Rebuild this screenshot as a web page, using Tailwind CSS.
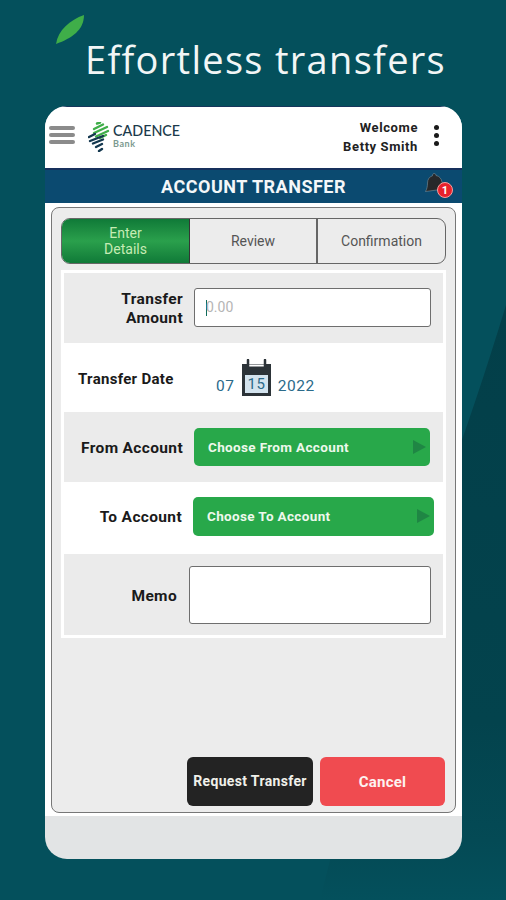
<!DOCTYPE html>
<html>
<head>
<meta charset="utf-8">
<script src="https://cdn.jsdelivr.net/npm/@tailwindcss/browser@4"></script>
</head>
<body class="m-0">
<div class="relative w-[506px] h-[900px] overflow-hidden bg-[#04505c] font-['Roboto',sans-serif]">
  <svg class="absolute left-0 top-0" width="506" height="900" viewBox="0 0 506 900">
    <defs>
      <linearGradient id="fade" gradientUnits="userSpaceOnUse" x1="0" y1="305" x2="0" y2="900">
        <stop offset="0" stop-color="#033f49"/>
        <stop offset="0.7" stop-color="#03434d"/>
        <stop offset="0.9" stop-color="#044a55"/>
        <stop offset="1" stop-color="#04505c"/>
      </linearGradient>
    </defs>
    <path d="M506 305 C480 390 450 480 405 590 C370 700 340 820 320 900 L506 900 Z" fill="url(#fade)"/>
    <path d="M56 44 C58 30 70 20 84 15 C84 30 72 38 56 44 Z" fill="#3fae49"/>
  </svg>
  <div class="relative">
    <div class="h-[106px] pl-[85px] pt-[35px]">
      <h1 class="m-0 text-[38px] leading-[48px] font-normal tracking-[1.3px] text-[#f2f6f6] font-['Open_Sans',sans-serif] whitespace-nowrap">Effortless transfers</h1>
    </div>
    <div class="ml-[45px] w-[417px] h-[753px] rounded-[22px] overflow-hidden bg-[#e2e4e5] flex flex-col">
      <header class="h-[64px] bg-white border-t border-[#16365c] border-b-2 border-b-[#16305c] flex items-center pl-[4px] pr-[23px] shrink-0">
        <div class="w-[26px] flex flex-col gap-[3px] -mt-[5px]">
          <span class="h-[4px] bg-[#8b8b8b] rounded-sm"></span>
          <span class="h-[4px] bg-[#8b8b8b] rounded-sm"></span>
          <span class="h-[4px] bg-[#8b8b8b] rounded-sm"></span>
        </div>
        <svg class="ml-[13px] -mt-[2px]" width="22" height="30" viewBox="0 0 22 30" fill="none" stroke-linecap="round">
          <g stroke="#3fae49" stroke-width="2.4">
            <path d="M9 1.5 L12 0.5"/><path d="M6 7 L15 2.5"/><path d="M6 11 L19 5"/><path d="M8 14.5 L20 9"/><path d="M12 16 L18 13"/>
          </g>
          <g stroke="#14384f" stroke-width="2.4">
            <path d="M1 15 L7 12"/><path d="M2 19 L15 14"/><path d="M5 21.500 L15 17.500"/><path d="M8 25 L14 22"/><path d="M11 29 L14 27"/>
          </g>
        </svg>
        <div class="ml-[3px] -mt-[3px] flex flex-col">
          <span class="text-[14.300px] leading-[15px] font-medium text-[#1b3a4b] font-['Lato',sans-serif]">CADENCE</span>
          <span class="text-[9px] leading-[10px] mt-[1px] font-bold text-[#7c9a90] font-['Lato',sans-serif] tracking-[0.6px]">Bank</span>
        </div>
        <div class="ml-auto text-right text-[13px] leading-[19px] font-bold tracking-[0.6px] text-[#222] -mt-[1px]">
          <div>Welcome</div>
          <div>Betty Smith</div>
        </div>
        <div class="ml-[16px] w-[5px] flex flex-col gap-[3px] -mt-[5px]">
          <span class="h-[5px] rounded-full bg-[#1a1a1a]"></span>
          <span class="h-[5px] rounded-full bg-[#1a1a1a]"></span>
          <span class="h-[5px] rounded-full bg-[#1a1a1a]"></span>
        </div>
      </header>
      <div class="relative h-[33px] shrink-0 bg-[#0b4a70] flex items-center justify-center">
        <span class="text-[18px] font-bold text-[#f4f7f9] tracking-[0.5px] -mt-[1px]">ACCOUNT TRANSFER</span>
        <svg class="absolute left-[380px] top-[3px]" width="20" height="21" viewBox="0 0 20 21">
          <path d="M9 0.500 C10.500 0.500 11 1.500 11 2.500 C14.500 3 16.500 6 17 9 C17.500 12 18.500 14 19.500 16 L0.500 18.500 C2 16 2.500 13 2.500 10 C2.500 6.500 4.500 3.500 7.500 2.800 C7.500 1.500 8 0.500 9 0.500 Z" fill="#26282a" stroke="#8fa3ad" stroke-width="0.5"/>
        </svg>
        <span class="absolute left-[392px] top-[12px] w-[16px] h-[16px] rounded-full bg-[#e8222c] border border-[#f5a0a0] flex items-center justify-center text-[11px] leading-none font-bold text-white">1</span>
      </div>
      <div class="h-[613px] shrink-0 bg-white pt-[4px] px-[6px] pb-[3px]">
        <div class="h-full border border-[#777] rounded-lg bg-[#ececec] flex flex-col px-[9px] pt-[10px] pb-[6px]">
          <div class="h-[46px] grid grid-cols-[128px_128px_1fr] rounded-[9px] border border-[#666] overflow-hidden text-[14px] text-[#555] shrink-0">
            <div class="bg-linear-to-b from-[#0f7a38] via-[#2aa04c] to-[#0f7a38] flex items-center justify-center text-center leading-[16px] text-[#c6ecb4] border-r border-[#333]">Enter<br>Details</div>
            <div class="flex items-center justify-center border-r-2 border-[#666]">Review</div>
            <div class="flex items-center justify-center">Confirmation</div>
          </div>
          <div class="mt-[6px] bg-white p-[3px] text-[15.500px] font-bold text-[#1a1a1a] tracking-[0.35px]">
            <div class="h-[70px] bg-[#ebebeb] flex items-center pl-[3px]">
              <div class="w-[116px] text-right leading-[19px] mt-[1px]">Transfer<br>Amount</div>
              <div class="ml-[11px] w-[237px] h-[39px] -mt-px bg-white border border-[#6e6e6e] rounded-[3px] flex items-center pl-[11px] text-[14px] font-normal text-[#b5b5b5] tracking-normal">
                <span class="w-px h-[16px] bg-[#0f6b5a] mr-[1px]"></span><span class="-ml-[2px]">0.00</span>
              </div>
            </div>
            <div class="h-[69px] flex items-center pl-[14px]">
              <div class="w-[127px] mt-[3px] text-[15px] tracking-[0.3px] whitespace-nowrap">Transfer Date</div>
              <div class="ml-[11px] flex items-end gap-[6px] text-[15.500px] font-normal text-[#2b6a8a] tracking-[0.6px] mt-[3px]">
                <span class="mb-[1px]">07</span>
                <svg class="mb-[3px]" width="31" height="38" viewBox="0 0 31 38">
                  <rect x="1" y="5" width="29" height="32" fill="#2c3338"/>
                  <rect x="4" y="16" width="23" height="18" fill="#d3e3ee"/>
                  <path d="M8 6.500 H23" stroke="#fff" stroke-width="2"/>
                  <path d="M7 1v8M24 1v8" stroke="#2c3338" stroke-width="2.500" stroke-linecap="round"/>
                  <text x="15.500" y="30" text-anchor="middle" font-family="Roboto" font-size="15" fill="#2b6a8a">15</text>
                </svg>
                <span class="mb-[1px]">2022</span>
              </div>
            </div>
            <div class="h-[70px] bg-[#ebebeb] flex items-center pl-[3px]">
              <div class="w-[116px] text-right whitespace-nowrap mt-[3px]">From Account</div>
              <div class="ml-[11px] w-[236px] h-[38px] bg-[#28a84a] rounded-[5px] flex items-center justify-between pl-[14px] pr-[3px] text-[13.500px] text-[#eef8ec]">
                <span>Choose From Account</span>
                <svg width="15" height="16" viewBox="0 0 15 16"><path d="M1 1 L14 8 L1 15 Z" fill="#1f8644"/></svg>
              </div>
            </div>
            <div class="h-[72px] flex items-center pl-[3px]">
              <div class="w-[115px] text-right whitespace-nowrap -mt-[1px]">To Account</div>
              <div class="ml-[11px] w-[241px] h-[39px] -mt-[4px] bg-[#28a84a] rounded-[5px] flex items-center justify-between pl-[14px] pr-[3px] text-[13.500px] text-[#eef8ec]">
                <span>Choose To Account</span>
                <svg width="15" height="16" viewBox="0 0 15 16"><path d="M1 1 L14 8 L1 15 Z" fill="#1f8644"/></svg>
              </div>
            </div>
            <div class="h-[81px] bg-[#ebebeb] flex items-center pl-[3px]">
              <div class="w-[110px] text-right mt-[5px]">Memo</div>
              <div class="ml-[12px] w-[242px] h-[58px] bg-white border border-[#6e6e6e] rounded-[3px]"></div>
            </div>
          </div>
          <div class="mt-auto flex justify-end gap-[7px] mr-[1px]">
            <button class="w-[126px] h-[49px] rounded-[6px] bg-[#232323] text-[14px] font-bold text-[#f0f0ea] tracking-[0.35px] whitespace-nowrap">Request Transfer</button>
            <button class="w-[125px] h-[49px] rounded-[6px] bg-[#f04b50] pt-[2px] text-[15px] font-bold text-[#fdf2f0] tracking-[0.2px]">Cancel</button>
          </div>
        </div>
      </div>
    </div>
  </div>
</div>
</body>
</html>
